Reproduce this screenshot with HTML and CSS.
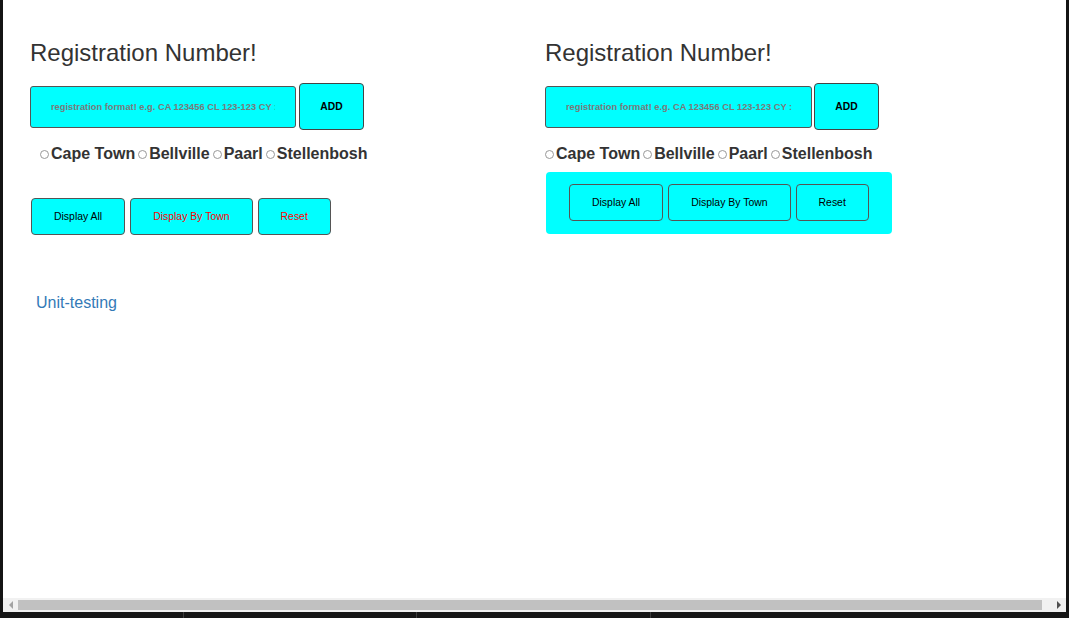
FILE: index.html
```html
<!DOCTYPE html>
<html lang="en">
<head>
<meta charset="utf-8">
<title>Registration Numbers</title>
<link rel="stylesheet" href="styles.css">
</head>
<body>
<div class="window">
  <main class="page">
    <section class="col col-left">
      <h1 class="title">Registration Number!</h1>
      <div class="entry">
        <input class="reg-input" type="text" placeholder="registration format! e.g. CA 123456 CL 123-123 CY : 123 456">
        <button class="add-btn" type="button">ADD</button>
      </div>
      <div class="towns towns-indent">
        <label class="town"><input class="radio" type="radio" name="town-a">Cape Town</label>
        <label class="town"><input class="radio" type="radio" name="town-a">Bellville</label>
        <label class="town"><input class="radio" type="radio" name="town-a">Paarl</label>
        <label class="town"><input class="radio" type="radio" name="town-a">Stellenbosh</label>
      </div>
      <div class="actions actions-plain">
        <button class="act" type="button">Display All</button>
        <button class="act act-red" type="button">Display By Town</button>
        <button class="act act-red" type="button">Reset</button>
      </div>
      <a class="unit-link" href="#">Unit-testing</a>
    </section>
    <section class="col col-right">
      <h1 class="title">Registration Number!</h1>
      <div class="entry entry-tight">
        <input class="reg-input reg-input-wide" type="text" placeholder="registration format! e.g. CA 123456 CL 123-123 CY : 123 456">
        <button class="add-btn" type="button">ADD</button>
      </div>
      <div class="towns">
        <label class="town"><input class="radio" type="radio" name="town-b">Cape Town</label>
        <label class="town"><input class="radio" type="radio" name="town-b">Bellville</label>
        <label class="town"><input class="radio" type="radio" name="town-b">Paarl</label>
        <label class="town"><input class="radio" type="radio" name="town-b">Stellenbosh</label>
      </div>
      <div class="actions actions-panel">
        <button class="act" type="button">Display All</button>
        <button class="act" type="button">Display By Town</button>
        <button class="act" type="button">Reset</button>
      </div>
    </section>
  </main>
  <div class="hscroll">
    <span class="arrow-box"><span class="arrow arrow-left"></span></span>
    <span class="thumb"></span>
    <span class="arrow-box"><span class="arrow arrow-right"></span></span>
  </div>
</div>
<div class="taskbar">
  <span class="seg seg-1"></span>
  <span class="seg seg-2"></span>
  <span class="seg seg-3"></span>
  <span class="seg seg-4"></span>
</div>
</body>
</html>
```

FILE: styles.css
```css
* { box-sizing: border-box; }

html, body {
  margin: 0;
  padding: 0;
}

body {
  width: 1069px;
  height: 618px;
  overflow: hidden;
  background: #141414;
  font-family: "Liberation Sans", Arial, sans-serif;
  color: #333;
}

.window {
  margin-left: 3px;
  width: 1063px;
  display: flex;
  flex-direction: column;
}

.page {
  height: 598px;
  background: #fff;
  padding-left: 27px;
  display: grid;
  grid-template-columns: 515px 1fr;
  align-items: start;
}

.col {
  display: flex;
  flex-direction: column;
  align-items: flex-start;
}

.title {
  margin: 40px 0 0;
  font-size: 24px;
  font-weight: 400;
  line-height: 26px;
  color: #333;
}

.entry {
  margin-top: 17px;
  display: flex;
  align-items: center;
  gap: 3px;
}

.entry-tight { gap: 2px; }

.reg-input {
  width: 266px;
  height: 42px;
  background: #00ffff;
  border: 1px solid #555;
  border-radius: 3px;
  padding: 0 20px;
  font-family: "Liberation Sans", Arial, sans-serif;
  font-size: 9.3px;
  font-weight: 700;
  color: #333;
  outline: none;
}

.reg-input-wide { width: 267px; }

.reg-input::placeholder {
  color: #7a7a7a;
  opacity: 1;
}

.add-btn {
  width: 65px;
  height: 47px;
  background: #00ffff;
  border: 1px solid #444;
  border-radius: 4px;
  font-family: "Liberation Sans", Arial, sans-serif;
  font-size: 10.3px;
  font-weight: 700;
  color: #000;
  padding: 0;
}

.towns {
  margin-top: 14px;
  display: flex;
  align-items: center;
  gap: 3px;
  height: 20px;
}

.towns-indent { padding-left: 10px; }

.town {
  display: inline-flex;
  align-items: center;
  gap: 2px;
  font-size: 16px;
  font-weight: 700;
  line-height: 20px;
  color: #333;
}

.radio {
  appearance: none;
  -webkit-appearance: none;
  width: 9px;
  height: 9px;
  margin: 1px 0 0;
  border: 1px solid #999;
  border-radius: 50%;
  background: #fff;
}

.actions {
  display: flex;
  gap: 5px;
}

.actions-plain {
  margin-top: 34px;
  padding-left: 1px;
}

.actions-panel {
  margin-top: 8px;
  margin-left: 1px;
  padding: 12px 23px 13px;
  background: #00ffff;
  border-radius: 4px;
}

.act {
  flex-shrink: 0;
  white-space: nowrap;
  height: 37px;
  padding: 0 22px;
  background: #00ffff;
  border: 1px solid #555;
  border-radius: 4px;
  font-family: "Liberation Sans", Arial, sans-serif;
  font-size: 10.45px;
  color: #000;
}

.act-red { color: #f00; }

.unit-link {
  margin-top: 58px;
  margin-left: 6px;
  font-size: 16px;
  line-height: 20px;
  color: #337ab7;
  text-decoration: none;
}

.hscroll {
  height: 14px;
  background: #f1f1f1;
  display: flex;
  align-items: center;
}

.arrow-box {
  width: 15px;
  height: 14px;
  display: flex;
  align-items: center;
  justify-content: center;
}

.arrow {
  width: 0;
  height: 0;
  border-top: 4px solid transparent;
  border-bottom: 4px solid transparent;
}

.arrow-left { border-right: 4px solid #a3a3a3; }
.arrow-right { border-left: 4px solid #505050; }

.thumb {
  flex: 1;
  height: 10px;
  margin-right: 9px;
  background: #c1c1c1;
}

.taskbar {
  height: 6px;
  display: flex;
  background: #161616;
}

.seg { height: 6px; border-right: 1px solid #3c3c3c; }
.seg-1 { width: 184px; }
.seg-2 { width: 233px; }
.seg-3 { width: 234px; }
.seg-4 { flex: 1; border-right: none; }
```
